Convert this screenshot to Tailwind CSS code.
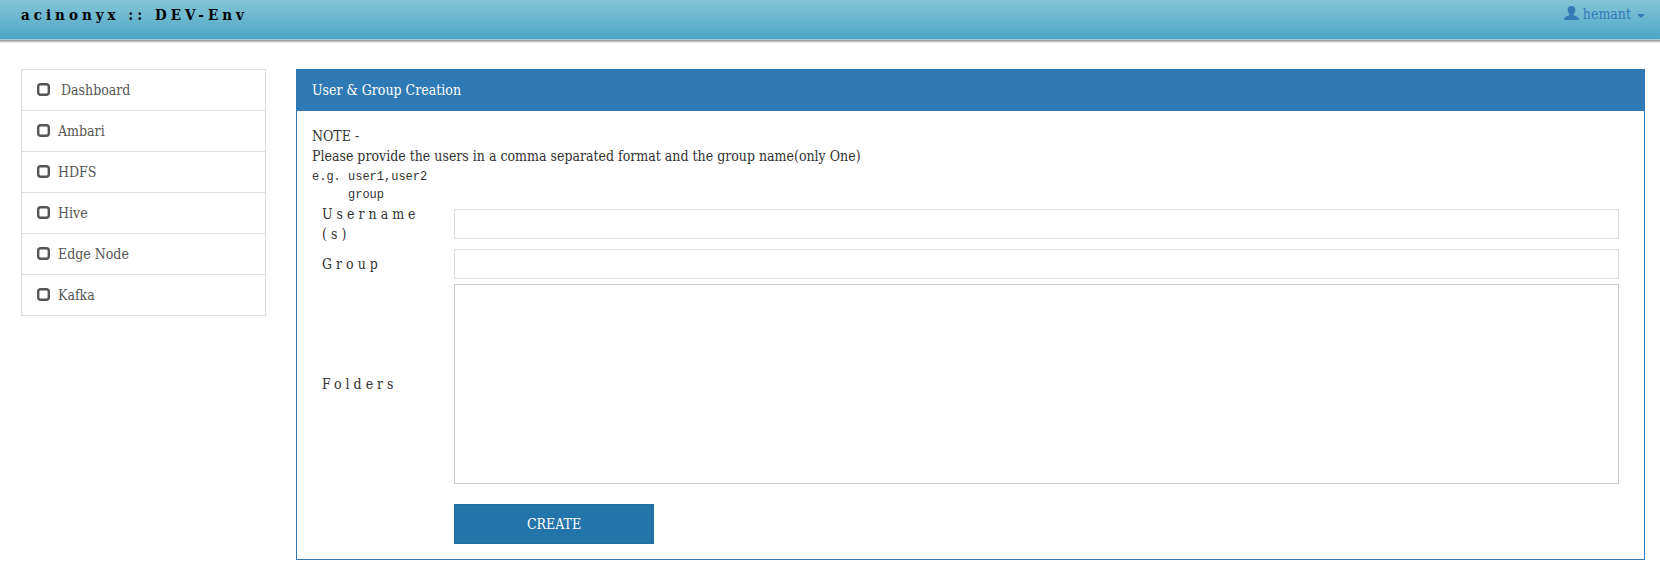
<!DOCTYPE html>
<html lang="en">
<head>
<meta charset="utf-8">
<title>acinonyx :: DEV-Env</title>
<script src="https://cdn.jsdelivr.net/npm/@tailwindcss/browser@4"></script>
</head>
<body class="bg-white font-['Roboto_Slab','DejaVu_Serif_Condensed','DejaVu_Serif',serif] text-[14px] leading-5 text-[#333]">
<svg class="hidden" aria-hidden="true"><symbol id="box" viewBox="0 0 13 13"><rect x="1.200" y="1.200" width="10.600" height="10.600" rx="2.500" fill="none" stroke="currentColor" stroke-width="2.400"/></symbol></svg>
<header class="flex h-[39px] items-start justify-between bg-linear-to-b from-[#85c6d7] to-[#4aa5c5] pr-[15px] pl-[21px] shadow-[0_1px_0_#a5ccd8,0_2px_0_#a3a0a3,0_3px_0_#c5c4c5,0_4px_0_#ececec]">
  <h1 class="pt-[5px] text-[15px] font-bold tracking-[4px] text-black">acinonyx :: DEV-Env</h1>
  <button type="button" class="flex items-center gap-1 pt-1 text-[#337ab7]">
    <svg class="mb-0.5 h-[14px] w-[15px]" viewBox="0 0 15 14" fill="currentColor" aria-hidden="true"><path d="M7.500 0C5 0 3.600 1.400 3.600 3.500c0 1 .3 2.300.9 3.300.4.700.9 1.100.9 1.700 0 .9-.7 1.200-1.800 1.600C1.500 10.900.1 11.600.1 13v1h14.800v-1c0-1.400-1.400-2.100-3.500-2.900-1.100-.4-1.800-.7-1.800-1.600 0-.6.5-1 .9-1.700.6-1 .9-2.300.9-3.300C11.400 1.400 10 0 7.500 0z"/></svg>
    <span>hemant</span>
    <svg class="mt-1 ml-0.5 h-1 w-2" viewBox="0 0 8 4" fill="currentColor" aria-hidden="true"><path d="M0 0h8L4 4z"/></svg>
  </button>
</header>
<div class="flex items-start gap-[30px] pt-[30px] pr-[15px] pl-[21px]">
  <nav class="w-[245px] shrink-0 divide-y divide-[#ddd] border border-[#ddd] text-[#555]">
    <a href="#" class="flex items-center gap-[11px] px-[15px] py-[10px]"><svg class="mb-px size-[13px]" aria-hidden="true"><use href="#box"/></svg>Dashboard</a>
    <a href="#" class="flex items-center gap-2 px-[15px] py-[10px]"><svg class="mb-px size-[13px]" aria-hidden="true"><use href="#box"/></svg>Ambari</a>
    <a href="#" class="flex items-center gap-2 px-[15px] py-[10px]"><svg class="mb-px size-[13px]" aria-hidden="true"><use href="#box"/></svg>HDFS</a>
    <a href="#" class="flex items-center gap-2 px-[15px] py-[10px]"><svg class="mb-px size-[13px]" aria-hidden="true"><use href="#box"/></svg>Hive</a>
    <a href="#" class="flex items-center gap-2 px-[15px] py-[10px]"><svg class="mb-px size-[13px]" aria-hidden="true"><use href="#box"/></svg>Edge Node</a>
    <a href="#" class="flex items-center gap-2 px-[15px] py-[10px]"><svg class="mb-px size-[13px]" aria-hidden="true"><use href="#box"/></svg>Kafka</a>
  </nav>
  <main class="min-w-0 flex-1 border border-[#2f7ab5]">
    <h2 class="bg-[#2f7ab5] px-[15px] pt-[10px] pb-[11px] text-white">User &amp; Group Creation</h2>
    <div class="p-[15px]">
      <p>NOTE -<br>Please provide the users in a comma separated format and the group name(only One)</p>
      <pre class="pt-0.5 font-['Courier_New','Liberation_Mono',monospace] text-[12px] leading-[18px]">e.g. user1,user2
     group</pre>
      <form class="grid grid-cols-[92px_1fr] items-center gap-x-10 px-[10px]">
        <label for="users" class="tracking-[4px]">Username<br>(s)</label>
        <input id="users" type="text" class="h-[30px] border border-[#ddd] px-2">
        <label for="group" class="tracking-[4px]">Group</label>
        <div class="flex h-10 items-center"><input id="group" type="text" class="h-[30px] w-full border border-[#ddd] px-2"></div>
        <label for="folders" class="tracking-[4px]">Folders</label>
        <textarea id="folders" class="h-[200px] resize-none border border-[#ccc] p-2"></textarea>
        <button type="submit" class="col-start-2 mt-5 h-10 w-[200px] border border-[#206e9f] bg-[#2374a8] text-white">CREATE</button>
      </form>
    </div>
  </main>
</div>
</body>
</html>
